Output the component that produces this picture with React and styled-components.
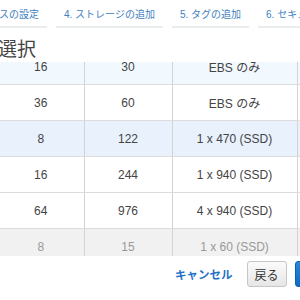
import React from 'react';
import styled, { createGlobalStyle } from 'styled-components';

const GlobalStyle = createGlobalStyle`
  html, body {
    margin: 0;
    padding: 0;
    background: #fff;
    overflow: hidden;
  }
  body {
    font-family: "Liberation Sans", Arial, "Noto Sans CJK JP", sans-serif;
    color: #444;
  }
`;

const Page = styled.div`
  width: 300px;
  height: 300px;
  overflow: hidden;
`;

const Tabs = styled.div`
  display: flex;
  gap: 9px;
  white-space: nowrap;
`;

const Tab = styled.div`
  display: flex;
  justify-content: ${(p) => (p.$clipped ? 'flex-end' : 'flex-start')};
  flex: 0 0 auto;
  width: ${(p) => (p.$width ? `${p.$width}px` : 'auto')};
  overflow: hidden;
  padding: 8px 8px 4px ${(p) => (p.$clipped ? '0' : '8px')};
  border-bottom: 2px solid #eaeded;
  font-size: 10px;
  line-height: 14px;
  color: #3f7fc1;
  box-sizing: border-box;
`;

const HeadingClip = styled.div`
  display: flex;
  justify-content: flex-end;
  width: 36px;
  overflow: hidden;
  margin-top: 10px;
`;

const Heading = styled.h2`
  margin: 0;
  white-space: nowrap;
  font-size: 19px;
  line-height: 24px;
  font-weight: normal;
  color: #444;
`;

const Viewport = styled.div`
  height: 194px;
  overflow: hidden;
`;

const Table = styled.table`
  margin: -13px 0 0 -2px;
  border-collapse: collapse;
  table-layout: fixed;
  width: 400px;
`;

const Row = styled.tr`
  background: ${(p) =>
    p.$state === 'hover'
      ? '#f1f8fe'
      : p.$state === 'selected'
      ? '#e8f1fc'
      : p.$state === 'disabled'
      ? '#f1f1f1'
      : '#fff'};
  color: ${(p) => (p.$state === 'disabled' ? '#999' : '#444')};
`;

const Cell = styled.td`
  height: 35px;
  padding: 0;
  text-align: center;
  font-size: 12px;
  border-right: 1px solid #d3d3d3;
  border-bottom: 1px solid #dcdcdc;
  white-space: nowrap;
`;

const Footer = styled.div`
  display: flex;
  align-items: center;
  padding-left: 175px;
  margin-top: 5px;
`;

const CancelLink = styled.a`
  font-size: 11.5px;
  font-weight: bold;
  color: #1f6fc5;
  text-decoration: none;
  margin-right: 14px;
  white-space: nowrap;
`;

const Button = styled.button`
  flex: 0 0 auto;
  height: 26px;
  padding: 0 7px;
  margin-right: 8px;
  border-radius: 3px;
  font-family: "Liberation Sans", Arial, "Noto Sans CJK JP", sans-serif;
  font-size: 12px;
  white-space: nowrap;
  border: 1px solid ${(p) => (p.$primary ? '#0a62b0' : '#c6c6c6')};
  color: ${(p) => (p.$primary ? '#fff' : '#333')};
  background: ${(p) =>
    p.$primary
      ? 'linear-gradient(#2c86d8, #0b6cc4)'
      : 'linear-gradient(#fbfbfb, #e6e6e6)'};
`;

const rows = [
  { state: 'hover', cells: ['16', '30', 'EBS のみ'] },
  { state: 'normal', cells: ['36', '60', 'EBS のみ'] },
  { state: 'selected', cells: ['8', '122', '1 x 470 (SSD)'] },
  { state: 'normal', cells: ['16', '244', '1 x 940 (SSD)'] },
  { state: 'normal', cells: ['64', '976', '4 x 940 (SSD)'] },
  { state: 'disabled', cells: ['8', '15', '1 x 60 (SSD)'] },
];

export default function App() {
  return (
    <Page>
      <GlobalStyle />
      <Tabs>
        <Tab $clipped $width={47}>3. インスタンスの設定</Tab>
        <Tab>4. ストレージの追加</Tab>
        <Tab>5. タグの追加</Tab>
        <Tab>6. セキュリティグループの設定</Tab>
      </Tabs>
      <HeadingClip>
        <Heading>ステップ 2: インスタンスタイプの選択</Heading>
      </HeadingClip>
      <Viewport>
        <Table>
          <colgroup>
            <col style={{ width: 86 }} />
            <col style={{ width: 88 }} />
            <col style={{ width: 125 }} />
            <col style={{ width: 101 }} />
          </colgroup>
          <tbody>
            {rows.map((r, i) => (
              <Row key={i} $state={r.state}>
                {r.cells.map((c, j) => (
                  <Cell key={j}>{c}</Cell>
                ))}
                <Cell />
              </Row>
            ))}
          </tbody>
        </Table>
      </Viewport>
      <Footer>
        <CancelLink href="#">キャンセル</CancelLink>
        <Button>戻る</Button>
        <Button $primary>確認と作成</Button>
      </Footer>
    </Page>
  );
}
